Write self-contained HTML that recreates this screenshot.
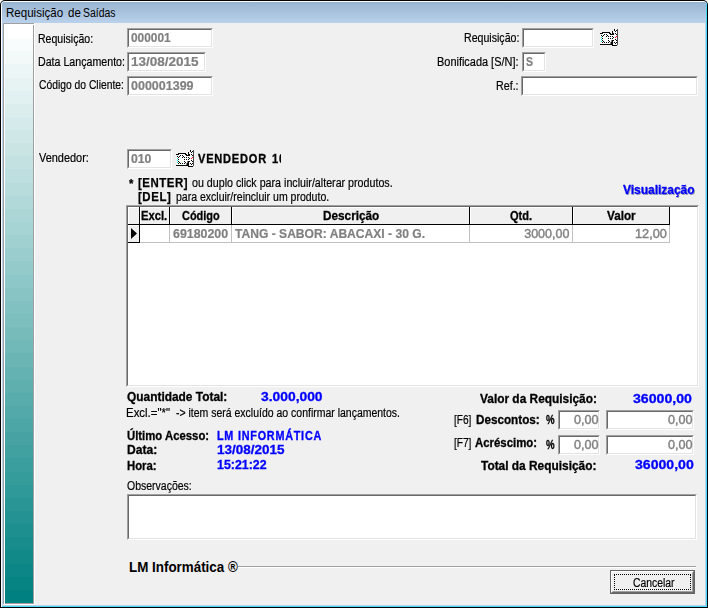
<!DOCTYPE html>
<html lang="pt-BR"><head><meta charset="utf-8"><title>Requisição de Saídas</title>
<style>
html,body{margin:0;padding:0;background:#fff;}
body{width:708px;height:608px;position:relative;overflow:hidden;font-family:"Liberation Sans", sans-serif;}
div,span,svg{position:absolute;box-sizing:border-box;}
.t{white-space:nowrap;transform-origin:0 0;}
#win{left:0;top:0;width:708px;height:608px;background:#000;border-radius:5px 5px 0 0;}
#hl{left:1px;top:1px;width:706px;height:606px;background:#fff;border-radius:4px 4px 0 0;}
#cy{left:2px;top:2px;width:705px;height:605px;background:#46d9f8;border-radius:3px 3px 0 0;}
#bl{left:2px;top:2px;width:704px;height:604px;background:#b9d1ea;border-radius:3px 2px 0 0;}
#cap{left:2px;top:2px;width:704px;height:21px;background:linear-gradient(to bottom,#99b4d1,#b9d1ea);border-radius:3px 2px 0 0;}
#cli{left:3px;top:23px;width:702px;height:582px;background:#f0f0f0;}
#pg{left:3px;top:23px;width:31px;height:581px;border:1px solid #a0a0a0;}
#pw{left:4px;top:24px;width:31px;height:581px;border:1px solid #fff;}
#grad{left:5px;top:25px;width:28px;height:578px;background:linear-gradient(to bottom,rgb(255,255,255) 0.00px 13.14px,rgb(249,252,252) 13.14px 26.27px,rgb(243,249,249) 26.27px 39.41px,rgb(237,246,246) 39.41px 52.55px,rgb(231,243,243) 52.55px 65.68px,rgb(225,240,240) 65.68px 78.82px,rgb(219,237,237) 78.82px 91.95px,rgb(213,234,234) 91.95px 105.09px,rgb(208,231,231) 105.09px 118.23px,rgb(202,228,228) 118.23px 131.36px,rgb(196,225,225) 131.36px 144.50px,rgb(190,223,223) 144.50px 157.64px,rgb(184,220,220) 157.64px 170.77px,rgb(178,217,217) 170.77px 183.91px,rgb(172,214,214) 183.91px 197.05px,rgb(166,211,211) 197.05px 210.18px,rgb(160,208,208) 210.18px 223.32px,rgb(154,205,205) 223.32px 236.45px,rgb(148,202,202) 236.45px 249.59px,rgb(142,199,199) 249.59px 262.73px,rgb(136,196,196) 262.73px 275.86px,rgb(130,193,193) 275.86px 289.00px,rgb(125,190,190) 289.00px 302.14px,rgb(119,187,187) 302.14px 315.27px,rgb(113,184,184) 315.27px 328.41px,rgb(107,181,181) 328.41px 341.55px,rgb(101,178,178) 341.55px 354.68px,rgb(95,175,175) 354.68px 367.82px,rgb(89,172,172) 367.82px 380.95px,rgb(83,169,169) 380.95px 394.09px,rgb(77,166,166) 394.09px 407.23px,rgb(71,163,163) 407.23px 420.36px,rgb(65,160,160) 420.36px 433.50px,rgb(59,158,158) 433.50px 446.64px,rgb(53,155,155) 446.64px 459.77px,rgb(47,152,152) 459.77px 472.91px,rgb(42,149,149) 472.91px 486.05px,rgb(36,146,146) 486.05px 499.18px,rgb(30,143,143) 499.18px 512.32px,rgb(24,140,140) 512.32px 525.45px,rgb(18,137,137) 525.45px 538.59px,rgb(12,134,134) 538.59px 551.73px,rgb(6,131,131) 551.73px 564.86px,rgb(0,128,128) 564.86px 578.00px);}
.sunk{border:1px solid;border-color:#a0a0a0 #fff #fff #a0a0a0;}
.sunk::after{content:"";position:absolute;left:0;top:0;right:0;bottom:0;border:1px solid;border-color:#696969 #e3e3e3 #e3e3e3 #696969;}
.hc{background:#f0f0f0;border:solid #000;border-width:0 1px 1px 0;box-shadow:inset 1px 1px 0 #fff;}
.dc{background:#fff;border:solid #c0c0c0;border-width:0 1px 1px 0;}
#btn{left:610px;top:570px;width:85px;height:24px;background:#f0f0f0;border:1px solid #646464;}
#btn i{position:absolute;left:0;top:0;right:0;bottom:0;border:1px solid;border-color:#fff #696969 #696969 #fff;}
#btn b{position:absolute;left:1px;top:1px;right:1px;bottom:1px;border:1px solid;border-color:#f0f0f0 #a0a0a0 #a0a0a0 #f0f0f0;}
#foc{left:614px;top:574px;width:77px;height:16px;border:1px dotted #000;}
.ic{overflow:visible;}
#lb{left:0;top:0;width:708px;height:608px;will-change:transform;}
</style></head><body>
<div id="win"></div><div id="hl"></div><div id="cy"></div><div id="bl"></div><div id="cap"></div>
<div id="cli"></div>
<div id="pg"></div><div id="pw"></div><div id="grad"></div>
<div class="sunk" style="left:127px;top:28px;width:86px;height:20px;background:#fff"></div>
<div class="sunk" style="left:127px;top:52px;width:79px;height:20px;background:#fff"></div>
<div class="sunk" style="left:127px;top:76px;width:86px;height:20px;background:#fff"></div>
<div class="sunk" style="left:522px;top:28px;width:72px;height:20px;background:#fff"></div>
<div class="sunk" style="left:522px;top:52px;width:24px;height:20px;background:#fff"></div>
<div class="sunk" style="left:521px;top:76px;width:177px;height:20px;background:#fff"></div>
<div class="sunk" style="left:127px;top:149px;width:45px;height:20px;background:#fff"></div>
<svg class="ic" style="left:600px;top:29px" width="18" height="17" viewBox="0 0 18 17" shape-rendering="crispEdges"><rect x="1" y="4" width="11" height="11" fill="#fff"/><rect x="12" y="6" width="2" height="7" fill="#fff"/><rect x="14" y="0" width="4" height="16" fill="#fff"/><rect x="2" y="3" width="8" height="1" fill="#000"/><rect x="0" y="4" width="3" height="1" fill="#000"/><rect x="9" y="4" width="2" height="1" fill="#000"/><rect x="10" y="5" width="4" height="1" fill="#000"/><rect x="12" y="2" width="1" height="4" fill="#000"/><rect x="13" y="4" width="1" height="2" fill="#000"/><rect x="0" y="15" width="11" height="1" fill="#000"/><rect x="11" y="13" width="1" height="3" fill="#000"/><rect x="13" y="11" width="1" height="1" fill="#000"/><rect x="12" y="11" width="1" height="6" fill="#000"/><rect x="12" y="16" width="5" height="1" fill="#000"/><rect x="10" y="13" width="1" height="2" fill="#808080"/><rect x="11" y="11" width="1" height="2" fill="#808080"/><rect x="17" y="0" width="1" height="16" fill="#484848"/><rect x="1" y="6" width="1" height="1" fill="#000"/><rect x="2" y="7" width="1" height="1" fill="#000"/><rect x="3" y="6" width="1" height="1" fill="#000"/><rect x="4" y="5" width="1" height="1" fill="#000"/><rect x="6" y="5" width="1" height="1" fill="#000"/><rect x="7" y="6" width="1" height="1" fill="#000"/><rect x="6" y="7" width="1" height="1" fill="#000"/><rect x="8" y="7" width="1" height="1" fill="#000"/><rect x="10" y="7" width="1" height="1" fill="#000"/><rect x="12" y="7" width="1" height="1" fill="#000"/><rect x="2" y="9" width="1" height="1" fill="#000"/><rect x="8" y="9" width="1" height="1" fill="#000"/><rect x="10" y="9" width="1" height="1" fill="#000"/><rect x="12" y="9" width="1" height="1" fill="#000"/><rect x="13" y="8" width="1" height="1" fill="#000"/><rect x="2" y="11" width="1" height="1" fill="#000"/><rect x="8" y="11" width="1" height="1" fill="#000"/><rect x="3" y="12" width="1" height="1" fill="#000"/><rect x="2" y="13" width="1" height="1" fill="#000"/><rect x="4" y="13" width="1" height="1" fill="#000"/><rect x="6" y="13" width="1" height="1" fill="#000"/><rect x="8" y="13" width="1" height="1" fill="#000"/><rect x="9" y="12" width="1" height="1" fill="#000"/><rect x="14" y="0" width="1" height="1" fill="#000"/><rect x="14" y="1" width="1" height="1" fill="#000"/><rect x="16" y="1" width="1" height="1" fill="#000"/><rect x="15" y="2" width="1" height="1" fill="#000"/><rect x="15" y="4" width="1" height="1" fill="#000"/><rect x="16" y="5" width="1" height="1" fill="#000"/><rect x="15" y="10" width="1" height="1" fill="#000"/><rect x="16" y="11" width="1" height="1" fill="#000"/><rect x="14" y="13" width="1" height="1" fill="#000"/><rect x="16" y="13" width="1" height="1" fill="#000"/><rect x="15" y="14" width="1" height="1" fill="#000"/><rect x="1" y="8" width="1" height="1" fill="#00e0ff"/><rect x="1" y="10" width="1" height="1" fill="#00e0ff"/><rect x="1" y="12" width="1" height="1" fill="#00e0ff"/><rect x="15" y="8" width="1" height="1" fill="#ff0000"/><rect x="16" y="7" width="1" height="1" fill="#ff0000"/></svg>
<svg class="ic" style="left:176px;top:150px" width="18" height="17" viewBox="0 0 18 17" shape-rendering="crispEdges"><rect x="1" y="4" width="11" height="11" fill="#fff"/><rect x="12" y="6" width="2" height="7" fill="#fff"/><rect x="14" y="0" width="4" height="16" fill="#fff"/><rect x="2" y="3" width="8" height="1" fill="#000"/><rect x="0" y="4" width="3" height="1" fill="#000"/><rect x="9" y="4" width="2" height="1" fill="#000"/><rect x="10" y="5" width="4" height="1" fill="#000"/><rect x="12" y="2" width="1" height="4" fill="#000"/><rect x="13" y="4" width="1" height="2" fill="#000"/><rect x="0" y="15" width="11" height="1" fill="#000"/><rect x="11" y="13" width="1" height="3" fill="#000"/><rect x="13" y="11" width="1" height="1" fill="#000"/><rect x="12" y="11" width="1" height="6" fill="#000"/><rect x="12" y="16" width="5" height="1" fill="#000"/><rect x="10" y="13" width="1" height="2" fill="#808080"/><rect x="11" y="11" width="1" height="2" fill="#808080"/><rect x="17" y="0" width="1" height="16" fill="#484848"/><rect x="1" y="6" width="1" height="1" fill="#000"/><rect x="2" y="7" width="1" height="1" fill="#000"/><rect x="3" y="6" width="1" height="1" fill="#000"/><rect x="4" y="5" width="1" height="1" fill="#000"/><rect x="6" y="5" width="1" height="1" fill="#000"/><rect x="7" y="6" width="1" height="1" fill="#000"/><rect x="6" y="7" width="1" height="1" fill="#000"/><rect x="8" y="7" width="1" height="1" fill="#000"/><rect x="10" y="7" width="1" height="1" fill="#000"/><rect x="12" y="7" width="1" height="1" fill="#000"/><rect x="2" y="9" width="1" height="1" fill="#000"/><rect x="8" y="9" width="1" height="1" fill="#000"/><rect x="10" y="9" width="1" height="1" fill="#000"/><rect x="12" y="9" width="1" height="1" fill="#000"/><rect x="13" y="8" width="1" height="1" fill="#000"/><rect x="2" y="11" width="1" height="1" fill="#000"/><rect x="8" y="11" width="1" height="1" fill="#000"/><rect x="3" y="12" width="1" height="1" fill="#000"/><rect x="2" y="13" width="1" height="1" fill="#000"/><rect x="4" y="13" width="1" height="1" fill="#000"/><rect x="6" y="13" width="1" height="1" fill="#000"/><rect x="8" y="13" width="1" height="1" fill="#000"/><rect x="9" y="12" width="1" height="1" fill="#000"/><rect x="14" y="0" width="1" height="1" fill="#000"/><rect x="14" y="1" width="1" height="1" fill="#000"/><rect x="16" y="1" width="1" height="1" fill="#000"/><rect x="15" y="2" width="1" height="1" fill="#000"/><rect x="15" y="4" width="1" height="1" fill="#000"/><rect x="16" y="5" width="1" height="1" fill="#000"/><rect x="15" y="10" width="1" height="1" fill="#000"/><rect x="16" y="11" width="1" height="1" fill="#000"/><rect x="14" y="13" width="1" height="1" fill="#000"/><rect x="16" y="13" width="1" height="1" fill="#000"/><rect x="15" y="14" width="1" height="1" fill="#000"/><rect x="1" y="8" width="1" height="1" fill="#00e0ff"/><rect x="1" y="10" width="1" height="1" fill="#00e0ff"/><rect x="1" y="12" width="1" height="1" fill="#00e0ff"/><rect x="15" y="8" width="1" height="1" fill="#ff0000"/><rect x="16" y="7" width="1" height="1" fill="#ff0000"/></svg>
<div class="sunk" style="left:126px;top:205px;width:573px;height:182px;background:#fff"></div>
<div class="hc" style="left:128px;top:207px;width:12px;height:18px"></div>
<div class="hc" style="left:128px;top:225px;width:12px;height:18px"></div>
<div class="hc" style="left:140px;top:207px;width:30px;height:18px"></div>
<div class="dc" style="left:140px;top:225px;width:30px;height:18px"></div>
<div class="hc" style="left:170px;top:207px;width:62px;height:18px"></div>
<div class="dc" style="left:170px;top:225px;width:62px;height:18px"></div>
<div class="hc" style="left:232px;top:207px;width:238px;height:18px"></div>
<div class="dc" style="left:232px;top:225px;width:238px;height:18px"></div>
<div class="hc" style="left:470px;top:207px;width:103px;height:18px"></div>
<div class="dc" style="left:470px;top:225px;width:103px;height:18px"></div>
<div class="hc" style="left:573px;top:207px;width:97px;height:18px"></div>
<div class="dc" style="left:573px;top:225px;width:97px;height:18px"></div>
<svg style="left:131px;top:228px" width="6" height="11" viewBox="0 0 6 11"><polygon points="0,0 6,5.5 0,11" fill="#000"/></svg>
<div class="sunk" style="left:558px;top:410px;width:42px;height:20px;background:#fff"></div>
<div class="sunk" style="left:606px;top:410px;width:88px;height:20px;background:#fff"></div>
<div class="sunk" style="left:558px;top:435px;width:42px;height:20px;background:#fff"></div>
<div class="sunk" style="left:606px;top:435px;width:88px;height:20px;background:#fff"></div>
<div class="sunk" style="left:127px;top:494px;width:570px;height:46px;background:#fff"></div>
<div style="left:238px;top:566px;width:458px;height:1px;background:#a0a0a0"></div>
<div style="left:238px;top:567px;width:458px;height:1px;background:#fff"></div>
<div id="btn"><i></i><b></b></div><div id="foc"></div>
<span class="t" id="t55" style="left:6.14px;top:4.84px;font-size:12px;line-height:16px;color:#000;font-weight:normal;transform:scaleX(0.9621);">Requisição</span>
<span class="t" id="t56" style="left:67.70px;top:4.84px;font-size:12px;line-height:16px;color:#000;font-weight:normal;transform:scaleX(0.9615);">de</span>
<span class="t" id="t57" style="left:83.40px;top:4.84px;font-size:12px;line-height:16px;color:#000;font-weight:normal;transform:scaleX(0.8703);">Saídas</span>
<span class="t" id="t58" style="left:128.80px;top:558.15px;font-size:14.0px;line-height:18px;color:#000;font-weight:bold;transform:scaleX(0.9561);">LM Informática ®</span>
<div id="lb">
<span class="t" id="t0" style="left:38.16px;top:30.67px;font-size:12.5px;line-height:16px;color:#000;font-weight:normal;-webkit-text-stroke:0.2px currentColor;transform:scaleX(0.8438);">Requisição:</span>
<span class="t" id="t1" style="left:38.15px;top:53.67px;font-size:12.5px;line-height:16px;color:#000;font-weight:normal;-webkit-text-stroke:0.2px currentColor;transform:scaleX(0.8515);">Data Lançamento:</span>
<span class="t" id="t2" style="left:39.00px;top:76.67px;font-size:12.5px;line-height:16px;color:#000;font-weight:normal;-webkit-text-stroke:0.2px currentColor;transform:scaleX(0.8255);">Código do Cliente:</span>
<span class="t" id="t3" style="left:464.15px;top:29.67px;font-size:12.5px;line-height:16px;color:#000;font-weight:normal;-webkit-text-stroke:0.2px currentColor;transform:scaleX(0.8484);">Requisição:</span>
<span class="t" id="t4" style="left:437.02px;top:53.67px;font-size:12.5px;line-height:16px;color:#000;font-weight:normal;-webkit-text-stroke:0.2px currentColor;transform:scaleX(0.8750);">Bonificada [S/N]:</span>
<span class="t" id="t5" style="left:495.84px;top:77.67px;font-size:12.5px;line-height:16px;color:#000;font-weight:normal;-webkit-text-stroke:0.2px currentColor;transform:scaleX(0.8560);">Ref.:</span>
<span class="t" id="t6" style="left:39.00px;top:149.67px;font-size:12.5px;line-height:16px;color:#000;font-weight:normal;-webkit-text-stroke:0.2px currentColor;transform:scaleX(0.8750);">Vendedor:</span>
<span class="t" id="t7" style="left:128.80px;top:175.67px;font-size:12.5px;line-height:16px;color:#000;font-weight:bold;letter-spacing:0.6px;-webkit-text-stroke:0.25px currentColor;transform:scaleX(0.9000);">*</span>
<span class="t" id="t8" style="left:138.00px;top:174.67px;font-size:12.5px;line-height:16px;color:#000;font-weight:bold;letter-spacing:0.6px;-webkit-text-stroke:0.25px currentColor;transform:scaleX(0.9148);">[ENTER]</span>
<span class="t" id="t9" style="left:191.60px;top:174.67px;font-size:12.5px;line-height:16px;color:#000;font-weight:normal;-webkit-text-stroke:0.2px currentColor;transform:scaleX(0.8543);">ou duplo click para incluir/alterar produtos.</span>
<span class="t" id="t10" style="left:138.00px;top:188.67px;font-size:12.5px;line-height:16px;color:#000;font-weight:bold;letter-spacing:0.6px;-webkit-text-stroke:0.25px currentColor;transform:scaleX(0.9171);">[DEL]</span>
<span class="t" id="t11" style="left:175.70px;top:188.67px;font-size:12.5px;line-height:16px;color:#000;font-weight:normal;-webkit-text-stroke:0.2px currentColor;transform:scaleX(0.8414);">para excluir/reincluir um produto.</span>
<span class="t" id="t12" style="left:126.09px;top:404.67px;font-size:12.5px;line-height:16px;color:#000;font-weight:normal;-webkit-text-stroke:0.2px currentColor;transform:scaleX(0.9149);">Excl.=&quot;*&quot;</span>
<span class="t" id="t13" style="left:175.80px;top:404.67px;font-size:12.5px;line-height:16px;color:#000;font-weight:normal;-webkit-text-stroke:0.2px currentColor;transform:scaleX(0.8386);">-&gt; item será excluído ao confirmar lançamentos.</span>
<span class="t" id="t14" style="left:454.00px;top:411.67px;font-size:12.5px;line-height:16px;color:#000;font-weight:normal;-webkit-text-stroke:0.2px currentColor;transform:scaleX(0.8095);">[F6]</span>
<span class="t" id="t15" style="left:454.00px;top:434.67px;font-size:12.5px;line-height:16px;color:#000;font-weight:normal;-webkit-text-stroke:0.2px currentColor;transform:scaleX(0.8095);">[F7]</span>
<span class="t" id="t16" style="left:127.00px;top:477.67px;font-size:12.5px;line-height:16px;color:#000;font-weight:normal;-webkit-text-stroke:0.2px currentColor;transform:scaleX(0.8390);">Observações:</span>
<span class="t" id="t17" style="left:632.70px;top:574.67px;font-size:12.5px;line-height:16px;color:#000;font-weight:normal;-webkit-text-stroke:0.2px currentColor;transform:scaleX(0.8300);">Cancelar</span>
<span class="t" id="t18" style="left:141.00px;top:207.67px;font-size:12.5px;line-height:16px;color:#000;font-weight:bold;-webkit-text-stroke:0.3px currentColor;transform:scaleX(0.8966);">Excl.</span>
<span class="t" id="t19" style="left:182.00px;top:207.67px;font-size:12.5px;line-height:16px;color:#000;font-weight:bold;-webkit-text-stroke:0.3px currentColor;transform:scaleX(0.8744);">Código</span>
<span class="t" id="t20" style="left:322.80px;top:207.67px;font-size:12.5px;line-height:16px;color:#000;font-weight:bold;-webkit-text-stroke:0.3px currentColor;transform:scaleX(0.9417);">Descrição</span>
<span class="t" id="t21" style="left:509.60px;top:207.67px;font-size:12.5px;line-height:16px;color:#000;font-weight:bold;-webkit-text-stroke:0.3px currentColor;transform:scaleX(0.8840);">Qtd.</span>
<span class="t" id="t22" style="left:607.20px;top:207.67px;font-size:12.5px;line-height:16px;color:#000;font-weight:bold;-webkit-text-stroke:0.3px currentColor;transform:scaleX(0.9355);">Valor</span>
<span class="t" id="t23" style="left:127.00px;top:388.67px;font-size:12.5px;line-height:16px;color:#000;font-weight:bold;-webkit-text-stroke:0.3px currentColor;transform:scaleX(0.9524);">Quantidade Total:</span>
<span class="t" id="t24" style="left:127.00px;top:427.67px;font-size:12.5px;line-height:16px;color:#000;font-weight:bold;-webkit-text-stroke:0.3px currentColor;transform:scaleX(0.9067);">Último Acesso:</span>
<span class="t" id="t25" style="left:127.00px;top:441.67px;font-size:12.5px;line-height:16px;color:#000;font-weight:bold;-webkit-text-stroke:0.3px currentColor;transform:scaleX(0.9667);">Data:</span>
<span class="t" id="t26" style="left:127.00px;top:457.67px;font-size:12.5px;line-height:16px;color:#000;font-weight:bold;-webkit-text-stroke:0.3px currentColor;transform:scaleX(0.9062);">Hora:</span>
<span class="t" id="t27" style="left:480.30px;top:390.67px;font-size:12.5px;line-height:16px;color:#000;font-weight:bold;-webkit-text-stroke:0.3px currentColor;transform:scaleX(0.9508);">Valor da Requisição:</span>
<span class="t" id="t28" style="left:475.60px;top:411.67px;font-size:12.5px;line-height:16px;color:#000;font-weight:bold;-webkit-text-stroke:0.3px currentColor;transform:scaleX(0.9358);">Descontos:</span>
<span class="t" id="t29" style="left:545.80px;top:411.67px;font-size:12.5px;line-height:16px;color:#000;font-weight:bold;-webkit-text-stroke:0.3px currentColor;transform:scaleX(0.7727);">%</span>
<span class="t" id="t30" style="left:475.20px;top:434.67px;font-size:12.5px;line-height:16px;color:#000;font-weight:bold;-webkit-text-stroke:0.3px currentColor;transform:scaleX(0.9119);">Acréscimo:</span>
<span class="t" id="t31" style="left:545.80px;top:436.67px;font-size:12.5px;line-height:16px;color:#000;font-weight:bold;-webkit-text-stroke:0.3px currentColor;transform:scaleX(0.7727);">%</span>
<span class="t" id="t32" style="left:481.20px;top:457.67px;font-size:12.5px;line-height:16px;color:#000;font-weight:bold;-webkit-text-stroke:0.3px currentColor;transform:scaleX(0.9512);">Total da Requisição:</span>
<span class="t" id="t33" style="left:623.00px;top:181.67px;font-size:12.5px;line-height:16px;color:#0000ff;font-weight:bold;-webkit-text-stroke:0.3px currentColor;transform:scaleX(0.9553);text-shadow:1px 1px 0 #a8a8a8,-1px -1px 0 #fafafa;">Visualização</span>
<span class="t" id="t34" style="left:260.70px;top:388.67px;font-size:12.5px;line-height:16px;color:#0000ff;font-weight:bold;-webkit-text-stroke:0.3px currentColor;transform:scaleX(1.1071);">3.000,000</span>
<span class="t" id="t35" style="left:216.50px;top:427.67px;font-size:12.5px;line-height:16px;color:#0000ff;font-weight:bold;letter-spacing:0.9px;-webkit-text-stroke:0.35px currentColor;transform:scaleX(0.8636);">LM INFORMÁTICA</span>
<span class="t" id="t36" style="left:216.50px;top:441.67px;font-size:12.5px;line-height:16px;color:#0000ff;font-weight:bold;-webkit-text-stroke:0.3px currentColor;transform:scaleX(1.0778);">13/08/2015</span>
<span class="t" id="t37" style="left:216.50px;top:456.67px;font-size:12.5px;line-height:16px;color:#0000ff;font-weight:bold;-webkit-text-stroke:0.3px currentColor;transform:scaleX(0.9900);">15:21:22</span>
<span class="t" id="t38" style="left:632.70px;top:390.67px;font-size:12.5px;line-height:16px;color:#0000ff;font-weight:bold;-webkit-text-stroke:0.3px currentColor;transform:scaleX(1.1308);">36000,00</span>
<span class="t" id="t39" style="left:634.70px;top:456.67px;font-size:12.5px;line-height:16px;color:#0000ff;font-weight:bold;-webkit-text-stroke:0.3px currentColor;transform:scaleX(1.1269);">36000,00</span>
<span class="t" id="t40" style="left:131.00px;top:29.67px;font-size:12.5px;line-height:16px;color:#808080;font-weight:bold;-webkit-text-stroke:0.2px currentColor;transform:scaleX(0.9524);">000001</span>
<span class="t" id="t41" style="left:131.00px;top:53.67px;font-size:12.5px;line-height:16px;color:#808080;font-weight:bold;-webkit-text-stroke:0.2px currentColor;transform:scaleX(1.0806);">13/08/2015</span>
<span class="t" id="t42" style="left:131.00px;top:77.67px;font-size:12.5px;line-height:16px;color:#808080;font-weight:bold;-webkit-text-stroke:0.2px currentColor;">000001399</span>
<span class="t" id="t43" style="left:525.50px;top:53.67px;font-size:12.5px;line-height:16px;color:#808080;font-weight:bold;-webkit-text-stroke:0.2px currentColor;transform:scaleX(0.8375);">S</span>
<span class="t" id="t44" style="left:130.50px;top:150.67px;font-size:12.5px;line-height:16px;color:#808080;font-weight:bold;-webkit-text-stroke:0.2px currentColor;transform:scaleX(0.9762);">010</span>
<span class="t" id="t45" style="left:172.50px;top:225.67px;font-size:12.5px;line-height:16px;color:#808080;font-weight:bold;-webkit-text-stroke:0.2px currentColor;transform:scaleX(0.9911);">69180200</span>
<span class="t" id="t46" style="left:235.00px;top:225.67px;font-size:12.5px;line-height:16px;color:#808080;font-weight:bold;-webkit-text-stroke:0.2px currentColor;transform:scaleX(0.9668);">TANG - SABOR: ABACAXI - 30 G.</span>
<span class="t" id="t47" style="left:524.20px;top:225.67px;font-size:12.5px;line-height:16px;color:#808080;font-weight:normal;-webkit-text-stroke:0.4px currentColor;">3000,00</span>
<span class="t" id="t48" style="left:634.80px;top:225.67px;font-size:12.5px;line-height:16px;color:#808080;font-weight:normal;-webkit-text-stroke:0.4px currentColor;transform:scaleX(1.0161);">12,00</span>
<span class="t" id="t49" style="left:574.00px;top:411.67px;font-size:12.5px;line-height:16px;color:#808080;font-weight:normal;-webkit-text-stroke:0.4px currentColor;transform:scaleX(1.0083);">0,00</span>
<span class="t" id="t50" style="left:668.00px;top:411.67px;font-size:12.5px;line-height:16px;color:#808080;font-weight:normal;-webkit-text-stroke:0.4px currentColor;transform:scaleX(1.0083);">0,00</span>
<span class="t" id="t51" style="left:574.00px;top:436.67px;font-size:12.5px;line-height:16px;color:#808080;font-weight:normal;-webkit-text-stroke:0.4px currentColor;transform:scaleX(1.0083);">0,00</span>
<span class="t" id="t52" style="left:668.00px;top:436.67px;font-size:12.5px;line-height:16px;color:#808080;font-weight:normal;-webkit-text-stroke:0.4px currentColor;transform:scaleX(1.0083);">0,00</span>
<span class="t" id="t53" style="left:198.00px;top:150.67px;font-size:12.5px;line-height:16px;color:#000;font-weight:bold;letter-spacing:0.9px;-webkit-text-stroke:0.35px currentColor;transform:scaleX(0.8831);">VENDEDOR</span>
<div style="left:272px;top:0;width:9px;height:608px;overflow:hidden"><span class="t" id="t54" style="left:0.30px;top:150.67px;font-size:12.5px;line-height:16px;color:#000;font-weight:bold;letter-spacing:0.9px;-webkit-text-stroke:0.35px currentColor;transform:scaleX(0.8867);">10</span></div>
</div>
</body></html>
